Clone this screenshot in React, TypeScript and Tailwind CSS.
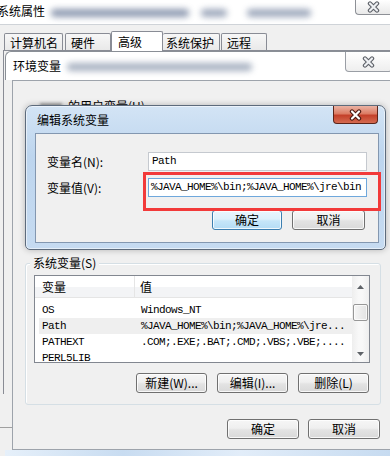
import React from "react";

const sans = "font-['Noto_Sans_CJK_SC','Noto_Sans',sans-serif]";
const mono =
  "font-['Liberation_Mono','Noto_Sans_CJK_SC',monospace] text-[11px] tracking-[-0.6px]";

function CloseX({ active }: { active?: boolean }) {
  return (
    <svg width="15" height="12" viewBox="0 0 15 12">
      <path
        d="M4 2.5 L11 9.5 M11 2.5 L4 9.5"
        stroke={active ? "#4a1a12" : "#5d6168"}
        strokeWidth="4.4"
        strokeLinecap="round"
        fill="none"
      />
      <path
        d="M4 2.5 L11 9.5 M11 2.5 L4 9.5"
        stroke={active ? "#ffffff" : "#eef0f3"}
        strokeWidth="2.2"
        strokeLinecap="round"
        fill="none"
      />
    </svg>
  );
}

function Btn({
  children,
  className = "",
  focused = false,
}: {
  children: React.ReactNode;
  className?: string;
  focused?: boolean;
}) {
  return (
    <div
      className={`h-[20px] flex items-center justify-center rounded-[3px] border text-[12px] leading-none text-black shadow-[inset_0_0_0_1px_rgba(255,255,255,0.8)] ${
        focused
          ? "border-[#3c7fb1] bg-[linear-gradient(#eaf6fd_0%,#ddf1fc_45%,#c6e6f9_55%,#b4dcf5_100%)]"
          : "border-[#707070] bg-[linear-gradient(#f6f6f6_0%,#efefef_45%,#e3e3e3_55%,#d9d9d9_100%)]"
      } ${className}`}
    >
      {children}
    </div>
  );
}

function Arrow({ up }: { up?: boolean }) {
  return (
    <svg width="7" height="4" viewBox="0 0 7 4">
      <path d={up ? "M0 4 L3.5 0 L7 4 Z" : "M0 0 L3.5 4 L7 0 Z"} fill="#5f6368" />
    </svg>
  );
}

const rows = [
  { name: "OS", value: "Windows_NT" },
  { name: "Path", value: "%JAVA_HOME%\\bin;%JAVA_HOME%\\jre...", selected: true },
  { name: "PATHEXT", value: ".COM;.EXE;.BAT;.CMD;.VBS;.VBE;...." },
  { name: "PERL5LIB", value: "" },
];

function ListView() {
  return (
    <div className="ml-[8px] mt-[6px] w-[336px] h-[88px] border border-[#828790] bg-white flex overflow-hidden">
      <div className="flex-1 flex flex-col overflow-hidden">
        <div className="h-[22px] shrink-0 flex border-b border-[#e5e5e5] bg-[linear-gradient(#ffffff_50%,#f3f4f6_50%)] text-[12px]">
          <div className="w-[100px] border-r border-[#e5e5e5] pl-[7px] flex items-center">变量</div>
          <div className="pl-[5px] flex items-center">值</div>
        </div>
        <div className="mt-[4px] flex flex-col">
          {rows.map((r) => (
            <div
              key={r.name}
              className={`ml-[4px] h-[16px] shrink-0 flex items-center ${mono} ${
                r.selected ? "bg-[#efefef]" : ""
              }`}
            >
              <div className="w-[96px] pl-[3px] whitespace-nowrap">{r.name}</div>
              <div className="pl-[6px] whitespace-nowrap">{r.value}</div>
            </div>
          ))}
        </div>
      </div>
      <div className="w-[17px] shrink-0 flex flex-col bg-[linear-gradient(to_right,#eeeeee,#f8f8f8_40%,#f8f8f8_60%,#eeeeee)]">
        <div className="h-[22px] flex items-center justify-center">
          <Arrow up />
        </div>
        <div className="mt-[6px] mx-[1px] h-[17px] rounded-[2px] border border-[#979797] bg-[linear-gradient(to_right,#f5f5f5,#e3e3e3)] shadow-[inset_0_0_0_1px_rgba(255,255,255,0.7)]" />
        <div className="flex-1" />
        <div className="h-[17px] flex items-center justify-center">
          <Arrow />
        </div>
      </div>
    </div>
  );
}

export default function App() {
  return (
    <div className={`relative w-[390px] h-[456px] overflow-hidden bg-[#f0f0f0] text-black ${sans}`}>
      {/* 系统属性 (behind) */}
      <div className="h-[25px] bg-white border-b border-[#cfd3d8] flex items-start">
        <span className="-ml-[3px] mt-[4px] text-[12px] leading-[14px] whitespace-nowrap">系统属性</span>
        <div className="mt-[9px] ml-[6px] h-[8px] w-[138px] rounded-full bg-[#5f7090] opacity-70 blur-[3px]" />
        <div className="mt-[9px] ml-[12px] h-[8px] w-[26px] rounded-full bg-[#5f7090] opacity-60 blur-[3px]" />
        <div className="mt-[9px] ml-[20px] h-[8px] w-[64px] rounded-full bg-[#5f7090] opacity-60 blur-[3px]" />
        <div className="ml-auto h-[15px] w-[35px] rounded-bl-[4px] border-l border-b border-[#8d9096] bg-[linear-gradient(#ffffff,#e9e9e9)] flex items-center justify-center">
          <CloseX />
        </div>
      </div>

      <div className="h-[25px] flex items-end pl-[4px] text-[12px]">
        <div className="w-[59px] h-[17px] pl-[5px] pt-[1px] flex items-center rounded-t-[2px] border-t border-l border-r border-[#898c95] bg-[linear-gradient(#f7f7f7,#e9e9e9)]">
          计算机名
        </div>
        <div className="ml-[2px] w-[46px] h-[17px] pl-[5px] pt-[1px] flex items-center rounded-t-[2px] border-t border-l border-r border-[#898c95] bg-[linear-gradient(#f7f7f7,#e9e9e9)]">
          硬件
        </div>
        <div className="relative z-10 -mb-[1px] w-[52px] h-[20px] pl-[6px] flex items-center rounded-t-[2px] border-t border-l border-r border-[#898c95] bg-white">
          高级
        </div>
        <div className="w-[57px] h-[17px] pl-[3px] pt-[1px] flex items-center rounded-t-[2px] border-t border-r border-[#898c95] bg-[linear-gradient(#f7f7f7,#e9e9e9)]">
          系统保护
        </div>
        <div className="ml-[1px] w-[46px] h-[17px] pl-[5px] pt-[1px] flex items-center rounded-t-[2px] border-t border-l border-r border-[#898c95] bg-[linear-gradient(#f7f7f7,#e9e9e9)]">
          远程
        </div>
      </div>
      <div className="ml-[3px] h-[344px] border-l border-t border-[#898c95]" />
      <div className="mt-[33px] w-[12px] border-t border-[#a0a0a0]" />

      {/* 环境变量 window */}
      <div className="absolute left-[5px] top-[51px] w-[393px] h-[410px] flex flex-col">
        <div className="h-[29px] shrink-0 flex items-start bg-white border-t border-l border-[#8a8f96] rounded-tl-[6px]">
          <span className="self-center ml-[7px] text-[12px] leading-[14px] whitespace-nowrap">环境变量</span>
          <div className="self-center ml-[6px] mt-[2px] h-[8px] w-[185px] rounded-full bg-[#6f7f99] opacity-60 blur-[3px]" />
          <div className="ml-auto mr-[6px] h-[20px] w-[47px] rounded-b-[4px] border-l border-r border-b border-[#9a9ea5] bg-[linear-gradient(#ffffff,#eeeeee)] flex items-center justify-center">
            <CloseX />
          </div>
        </div>
        <div className="ml-[7px] h-[370px] shrink-0 border border-[#9da3ab] bg-[#f0f0f0] flex flex-col">
          <div className="h-[182px] shrink-0 pl-[27px] pt-[19px] flex items-start">
            <div className="mt-[3px] h-[7px] w-[22px] bg-[#555] opacity-50 blur-[1.5px]" />
            <span className="ml-[6px] text-[12px] leading-[12px] whitespace-nowrap">的用户变量(U)</span>
          </div>

          <div className="ml-[12px] w-[356px] border border-[#d5dfe5] rounded-[3px] shadow-[inset_1px_1px_0_#ffffff] pb-[11px]">
            <div className="-mt-[7px] ml-[4px] w-fit px-[3px] bg-[#f0f0f0] text-[12px] leading-[12px] whitespace-nowrap">
              系统变量(S)
            </div>
            <ListView />
            <div className="mt-[10px] pr-[11px] flex justify-end gap-[10px]">
              <Btn className="w-[71px]">新建(W)...</Btn>
              <Btn className="w-[71px]">编辑(I)...</Btn>
              <Btn className="w-[71px]">删除(L)</Btn>
            </div>
          </div>

          <div className="mt-[14px] ml-[12px] w-[356px] pr-[1px] flex justify-end gap-[9px]">
            <Btn className="w-[72px]">确定</Btn>
            <Btn className="w-[72px]">取消</Btn>
          </div>
        </div>
        <div className="flex-1 bg-[linear-gradient(90deg,#e6f0fa,#c8dcf1_30%,#e2edf9_60%,#c5daf0)]" />
      </div>

      {/* 编辑系统变量 dialog */}
      <div className="absolute left-[25px] top-[105px] w-[361px] h-[145px] rounded-t-[7px] rounded-b-[5px] border border-[#5d6b7c] bg-[linear-gradient(180deg,#d3e4f5_0%,#bdd5ee_35%,#c6dbf1_100%)] shadow-[0_0_6px_rgba(0,0,0,0.25),inset_0_0_0_1px_rgba(255,255,255,0.55)] flex flex-col">
        <div className="h-[27px] shrink-0 flex items-start">
          <span className="self-center ml-[11px] text-[12px] leading-[14px] whitespace-nowrap">编辑系统变量</span>
          <div className="ml-auto mr-[7px] h-[18px] w-[45px] rounded-b-[4px] border-l border-r border-b border-[#5b2419] bg-[linear-gradient(#eab2a3_0%,#dc7c64_45%,#c4402a_55%,#d46a50_100%)] flex items-center justify-center">
            <CloseX active />
          </div>
        </div>
        <div className="ml-[9px] w-[344px] h-[110px] shrink-0 border border-[#8397b0] bg-[#f0f0f0] flex flex-col">
          <div className="mt-[18px] flex items-center">
            <div className="w-[112px] pl-[11px] text-[12px] whitespace-nowrap">变量名(N):</div>
            <div className={`w-[219px] h-[19px] border border-[#c5c9cf] bg-white pl-[3px] flex items-center ${mono}`}>
              Path
            </div>
          </div>
          <div className="mt-[7px] flex items-center">
            <div className="w-[112px] pl-[11px] text-[12px] whitespace-nowrap">变量值(V):</div>
            <div className={`w-[219px] h-[19px] border border-[#6fa8dc] bg-white pl-[2px] flex items-center whitespace-nowrap overflow-hidden ${mono}`}>
              %JAVA_HOME%\bin;%JAVA_HOME%\jre\bin
            </div>
          </div>
          <div className="mt-[13px] pr-[13px] flex justify-end gap-[10px]">
            <Btn className="w-[70px]" focused>
              确定
            </Btn>
            <Btn className="w-[73px]">取消</Btn>
          </div>
        </div>
        <div className="absolute left-[117px] top-[66px] w-[238px] h-[39px] border-[3px] border-[#f23a3a]" />
      </div>
    </div>
  );
}
